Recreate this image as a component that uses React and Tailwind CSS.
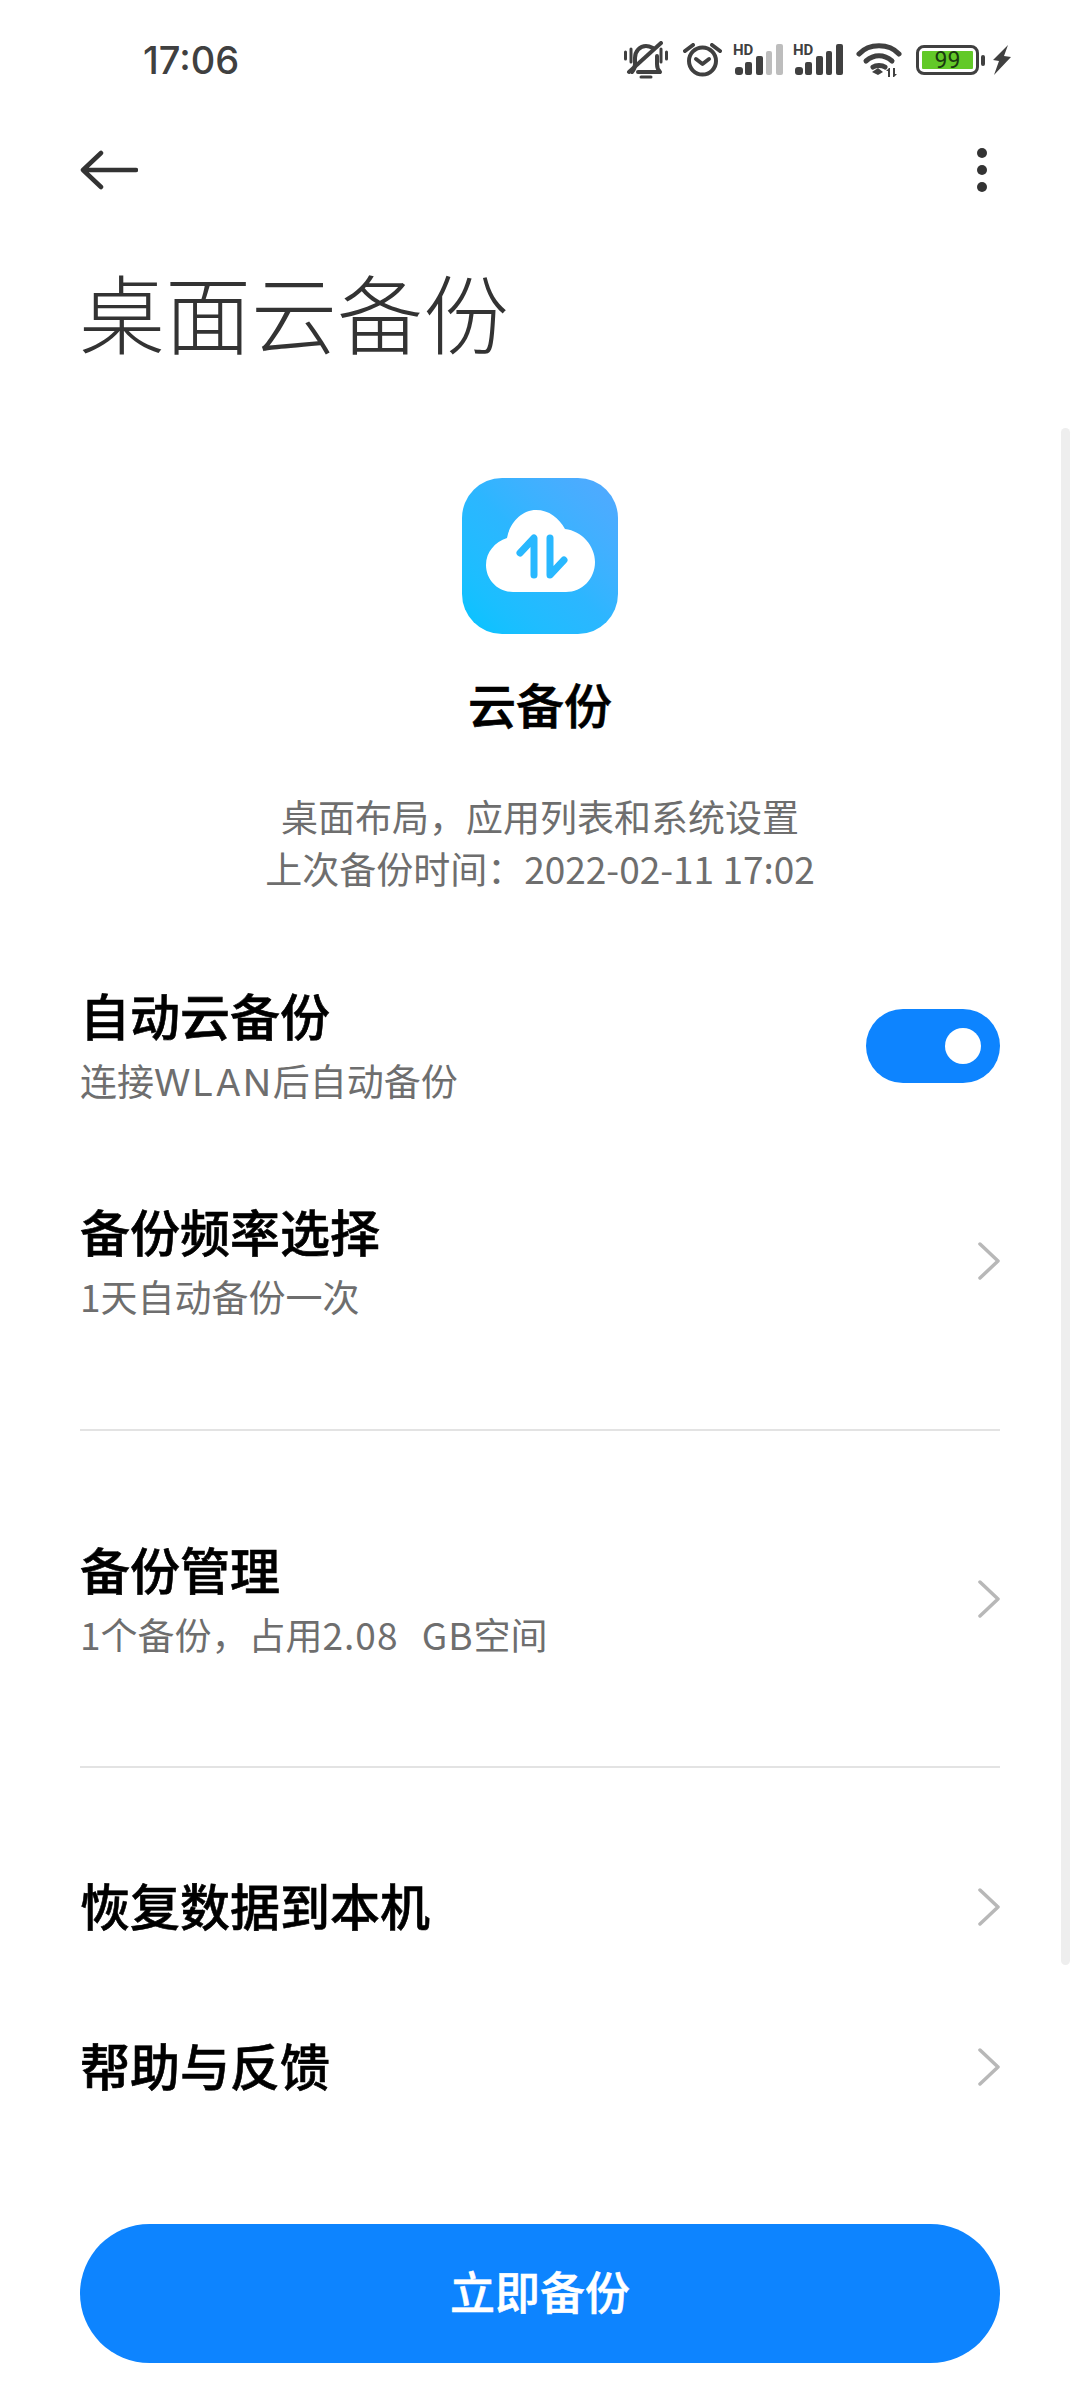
const F = '"Noto Sans CJK SC","Noto Sans",sans-serif';

function Chevron({ className = "" }) {
  return (
    <svg className={className} width="22" height="38" viewBox="0 0 22 38" fill="none" stroke="#b8b8b8" strokeWidth="3.5" strokeLinecap="round" strokeLinejoin="round">
      <path d="M2 2 L20 19 L2 36" />
    </svg>
  );
}

function Row({ title, sub, className = "", right }) {
  return (
    <div className={"flex items-center justify-between " + className}>
      <div className="flex flex-col">
        <div className="text-[50px] leading-[64px] font-medium text-black [-webkit-text-stroke:0.6px_black]">{title}</div>
        {sub && <div className="pt-[2px] text-[37px] leading-[64px] text-[#6e6e6e]">{sub}</div>}
      </div>
      {right || <Chevron className={sub ? "mb-[4px]" : "mt-[6px]"} />}
    </div>
  );
}

function Bars({ dim }) {
  const c = dim ? "#bdbdbd" : "#404040";
  return (
    <svg width="50" height="38" viewBox="0 -3 50 38">
      <text x="0" y="11" fontSize="15" fontWeight="700" fill="#404040" fontFamily="Roboto, sans-serif">HD</text>
      <rect x="2" y="23" width="8" height="8" rx="3" fill="#404040" />
      <rect x="12" y="18" width="7" height="13" rx="2" fill="#404040" />
      <rect x="23" y="12" width="7" height="19" rx="2" fill="#404040" />
      <rect x="33" y="7" width="6" height="24" rx="2" fill={c} />
      <rect x="43" y="0" width="7" height="31" rx="2" fill={c} />
    </svg>
  );
}

function StatusIcons() {
  return (
    <div className="flex items-center">
      <svg width="44" height="38" viewBox="0 0 44 38" fill="none" stroke="#404040" strokeWidth="4" strokeLinecap="round" strokeLinejoin="round">
        <path d="M1.5 11v7M7 8v13M42.5 11v7M37 8v13" strokeWidth="3" />
        <path d="M8 31c2-2 3-4 3-8v-6c0-7 5-12 11-12 3 0 5 1 7 2" />
        <path d="M33 15v8c0 4 1 6 3 8H14" />
        <path d="M37 2 L5 31" />
        <path d="M17 36h10" strokeWidth="3" />
      </svg>
      <svg className="ml-[15px]" width="39" height="34" viewBox="0 0 39 34" fill="none" stroke="#404040" strokeWidth="4" strokeLinecap="round" strokeLinejoin="round">
        <circle cx="19.5" cy="18" r="13.5" />
        <path d="M13 16l6.5 5 6.5-5" />
        <path d="M2 8l8-6M37 8l-8-6" />
      </svg>
      <div className="ml-[11px] flex"><Bars dim /></div>
      <div className="ml-[10px] flex"><Bars /></div>
      <svg className="ml-[13px]" width="46" height="36" viewBox="0 0 46 36" fill="none" stroke="#404040" strokeWidth="5" strokeLinecap="round">
        <path d="M3 12C13 1 33 1 43 12" />
        <path d="M10 19c8-7 18-7 26 0" />
        <path d="M17 25c3-2 9-2 12 0" />
        <path d="M16 30l6-4 5 4-5 3z" fill="#404040" stroke="none" />
        <path d="M33 26l-3 3h2v6h2v-9zM38 35l3-3h-2v-6h-2v9z" fill="#404040" stroke="none" />
      </svg>
      <div className="ml-[14px] h-[30px] w-[63px] rounded-[8px] border-[3px] border-[#404040] p-[3px] flex">
        <div className="flex-1 rounded-[1px] bg-[#62c928] flex items-center justify-center text-[23px] leading-none text-[#1a3a10]" style={{ fontFamily: "Roboto, sans-serif" }}>99</div>
      </div>
      <div className="ml-[2px] h-[11px] w-[4px] rounded-[2px] bg-[#404040]" />
      <svg className="ml-[8px]" width="18" height="30" viewBox="0 0 18 30" fill="#404040">
        <path d="M15 0 L0 15 L6 16 L1 30 L18 12 L11 11 Z" />
      </svg>
    </div>
  );
}

export default function App() {
  return (
    <div className="relative w-[1080px] h-[2400px] bg-white overflow-hidden" style={{ fontFamily: F }}>
      <div className="absolute top-[30px] left-0 right-0 flex items-center justify-between h-[60px] pl-[143px] pr-[69px]">
        <span className="text-[38px] leading-none font-medium text-[#404040]" style={{ fontFamily: 'Inter, sans-serif' }}>17:06</span>
        <StatusIcons />
      </div>

      <div className="pt-[148px] px-[80px]">
        <div className="flex items-center justify-between h-[44px]">
          <svg width="58" height="40" viewBox="0 0 58 40" fill="none" stroke="#333" strokeWidth="4.5" strokeLinecap="round" strokeLinejoin="round">
            <path d="M3 20H56M21 3 L3 20 L21 37" />
          </svg>
          <div className="flex flex-col gap-[7px] mr-[13px]">
            <div className="w-[10px] h-[10px] rounded-full bg-[#333]" />
            <div className="w-[10px] h-[10px] rounded-full bg-[#333]" />
            <div className="w-[10px] h-[10px] rounded-full bg-[#333]" />
          </div>
        </div>
        <div className="mt-[64px] text-[86px] leading-[110px] font-light text-[#333] -ml-[1px]">桌面云备份</div>
      </div>

      <div className="flex flex-col items-center mt-[112px]">
        <div className="flex h-[156px] w-[156px] items-center justify-center rounded-[40px] bg-gradient-to-tr from-[#00c4ff] via-[#2cb6ff] to-[#52a8ff] pb-[10px]">
          <svg width="109" height="82" viewBox="0 0 109 82">
            <path d="M27 82C12 82 0 70 0 55C0 42 9 32 21 28C24 12 36 0 50 0C63 0 73 8 79 19C96 21 109 36 109 52C109 69 96 82 80 82Z" fill="#fff" />
            <g fill="none" stroke="#29b8ff" strokeWidth="7" strokeLinecap="round" strokeLinejoin="round">
              <path d="M34 43 L48 28 V65" />
              <path d="M64 28 V65 L78 50" />
            </g>
          </svg>
        </div>
        <div className="mt-[37px] text-[48px] leading-[64px] font-medium text-black [-webkit-text-stroke:0.6px_black]">云备份</div>
        <div className="mt-[55px] text-[37px] leading-[52px] text-[#6e6e6e] text-center">
          <div>桌面布局，应用列表和系统设置</div>
          <div>上次备份时间：2022-02-11 17:02</div>
        </div>
      </div>

      <div className="px-[80px] mt-[88px]">
        <Row
          title="自动云备份"
          sub={<>连接<span className="leading-none tracking-[2px]" style={{ fontFamily: 'Inter, sans-serif' }}>WLAN</span>后自动备份</>}
          right={
            <div className="mb-[2px] flex h-[74px] w-[134px] items-center justify-end rounded-full bg-[#0d84ff] pr-[19px]">
              <div className="h-[36px] w-[36px] rounded-full bg-white" />
            </div>
          }
        />
        <Row title="备份频率选择" sub="1天自动备份一次" className="mt-[86px]" />
        <div className="mt-[101px] h-[2px] bg-[#e3e3e3]" />
        <Row title="备份管理" sub={<>1个备份，占用<span className="tracking-[1px] [word-spacing:14px]">2.08 GB</span>空间</>} className="mt-[105px]" />
        <div className="mt-[100px] h-[2px] bg-[#e3e3e3]" />
        <Row title="恢复数据到本机" className="mt-[104px]" />
        <Row title="帮助与反馈" className="mt-[96px]" />
      </div>

      <div className="absolute left-[1061px] top-[428px] h-[1537px] w-[9px] rounded-full bg-[#eeeeee]" />

      <div className="absolute left-[80px] top-[2224px] flex h-[139px] w-[920px] items-center justify-center rounded-full bg-[#0d84ff] pb-[6px] text-[45px] font-medium text-white [-webkit-text-stroke:0.5px_white]">
        立即备份
      </div>
    </div>
  );
}
